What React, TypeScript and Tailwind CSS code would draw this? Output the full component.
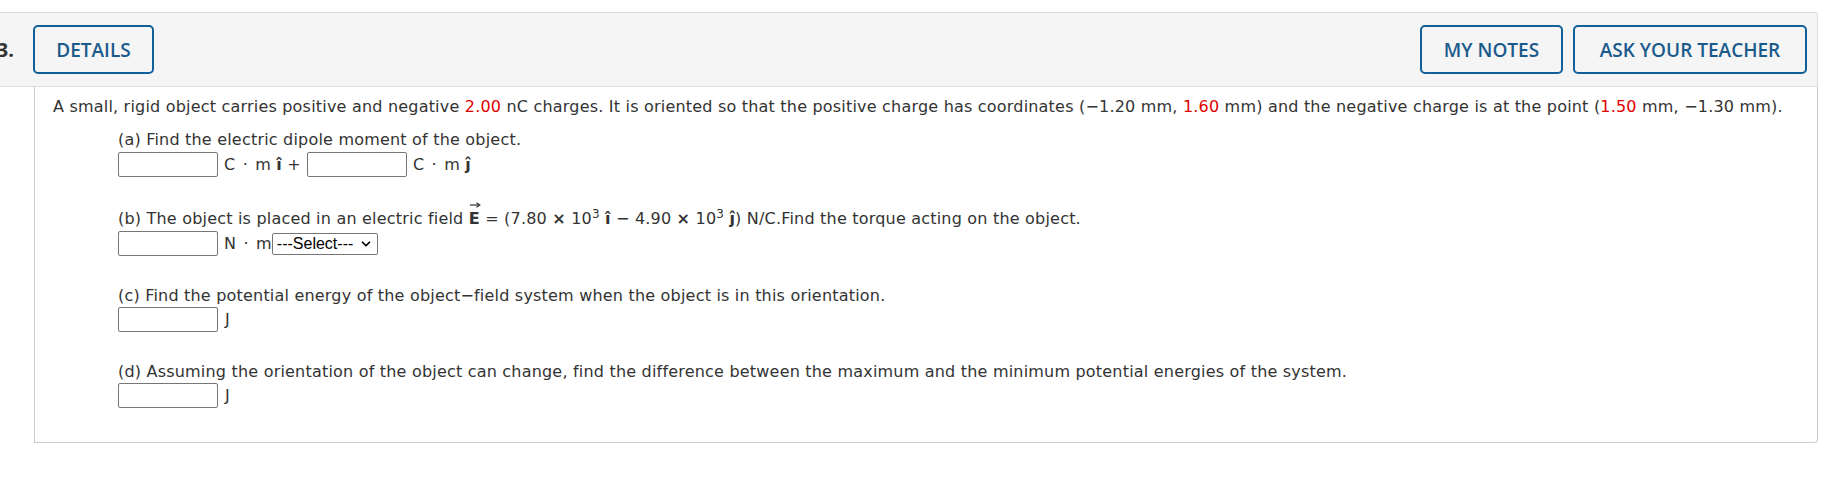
import { ChevronDown } from "lucide-react";

function AnswerBox() {
    return <input type="text" className="w-[100px] h-[25px] border border-[#767676] rounded-[2px] bg-white" />;
}

function Hat({ ch }: { ch: string }) {
    return <b className="font-bold">{ch}</b>;
}

function Red({ children }: { children: React.ReactNode }) {
    return <span className="text-[#e00000]">{children}</span>;
}

function Dot() {
    return <span className="px-[2px]">·</span>;
}

function VecE() {
    return (
        <span className="relative inline-block font-bold">
            E
            <svg className="absolute left-[1px] top-[-7px]" width="11" height="6" viewBox="0 0 11 6">
                <path d="M0 3 H9" stroke="#333" strokeWidth="1.2" />
                <path d="M6.5 0.8 L9.8 3 L6.5 5.2" fill="none" stroke="#333" strokeWidth="1.2" />
            </svg>
        </span>
    );
}

export default function App() {
    return (
        <div className="pt-[12px] pr-[8px] bg-white text-[#333] font-['DejaVu_Sans',sans-serif] text-[16px] tracking-[0.2px] leading-[20px] overflow-hidden">
            {/* question header */}
            <div className="-ml-[20px] h-[75px] flex items-center bg-[#f5f5f5] border-y border-r border-[#dddddd] rounded-tr-[3px] tracking-normal">
                <span className="w-[34px] text-right font-['Open_Sans',sans-serif] font-bold text-[20px] text-[#333]">3.</span>
                <button className="ml-[19px] w-[121px] h-[49px] border-2 border-[#11609a] rounded-[5px] text-[#1b5b8c] font-['Open_Sans',sans-serif] font-semibold text-[19px]">
                    DETAILS
                </button>
                <div className="ml-auto mr-[10px] flex gap-[10px]">
                    <button className="w-[143px] h-[49px] border-2 border-[#11609a] rounded-[5px] text-[#1b5b8c] font-['Open_Sans',sans-serif] font-semibold text-[19px]">
                        MY NOTES
                    </button>
                    <button className="w-[234px] h-[49px] border-2 border-[#11609a] rounded-[5px] text-[#1b5b8c] font-['Open_Sans',sans-serif] font-semibold text-[19px]">
                        ASK YOUR TEACHER
                    </button>
                </div>
            </div>

            {/* question body */}
            <div className="ml-[34px] border-x border-b border-[#cccccc] rounded-br-[4px] pt-[10px] pl-[18px] pb-[34px]">
                <p>
                    A small, rigid object carries positive and negative <Red>2.00</Red> nC charges. It is oriented so that the positive charge has coordinates (−1.20 mm, <Red>1.60</Red> mm) and the negative charge is at the point (<Red>1.50</Red> mm, −1.30 mm).
                </p>

                <div className="ml-[65px]">
                    <div className="mt-[13px]">
                        <p>(a) Find the electric dipole moment of the object.</p>
                        <div className="mt-[2px] flex items-center">
                            <AnswerBox />
                            <span className="ml-[6px]">C <Dot /> m <Hat ch="î" /> +</span>
                            <span className="ml-[6px]"><AnswerBox /></span>
                            <span className="ml-[6px]">C <Dot /> m <Hat ch="ĵ" /></span>
                        </div>
                    </div>

                    <div className="mt-[32px]">
                        <p>
                            (b) The object is placed in an electric field <VecE /> = (7.80 <b>×</b> 10<sup>3</sup> <b>î</b> − 4.90 <b>×</b> 10<sup>3</sup> <b>ĵ</b>) N/C.Find the torque acting on the object.
                        </p>
                        <div className="mt-[2px] flex items-center">
                            <AnswerBox />
                            <span className="ml-[6px]">N <Dot /> m</span>
                            <div className="flex items-center justify-between w-[106px] h-[22px] border border-[#767676] rounded-[2px] pl-[4px] pr-[4px] font-['Liberation_Sans',sans-serif] text-[16px] tracking-normal text-black bg-white">
                                <span>---Select---</span>
                                <ChevronDown className="w-[14px] h-[14px]" strokeWidth={3} />
                            </div>
                        </div>
                    </div>

                    <div className="mt-[30px]">
                        <p>(c) Find the potential energy of the object−field system when the object is in this orientation.</p>
                        <div className="mt-[1px] flex items-center">
                            <AnswerBox />
                            <span className="ml-[7px]">J</span>
                        </div>
                    </div>

                    <div className="mt-[30px]">
                        <p>(d) Assuming the orientation of the object can change, find the difference between the maximum and the minimum potential energies of the system.</p>
                        <div className="mt-[1px] flex items-center">
                            <AnswerBox />
                            <span className="ml-[7px]">J</span>
                        </div>
                    </div>
                </div>
            </div>
        </div>
    );
}
